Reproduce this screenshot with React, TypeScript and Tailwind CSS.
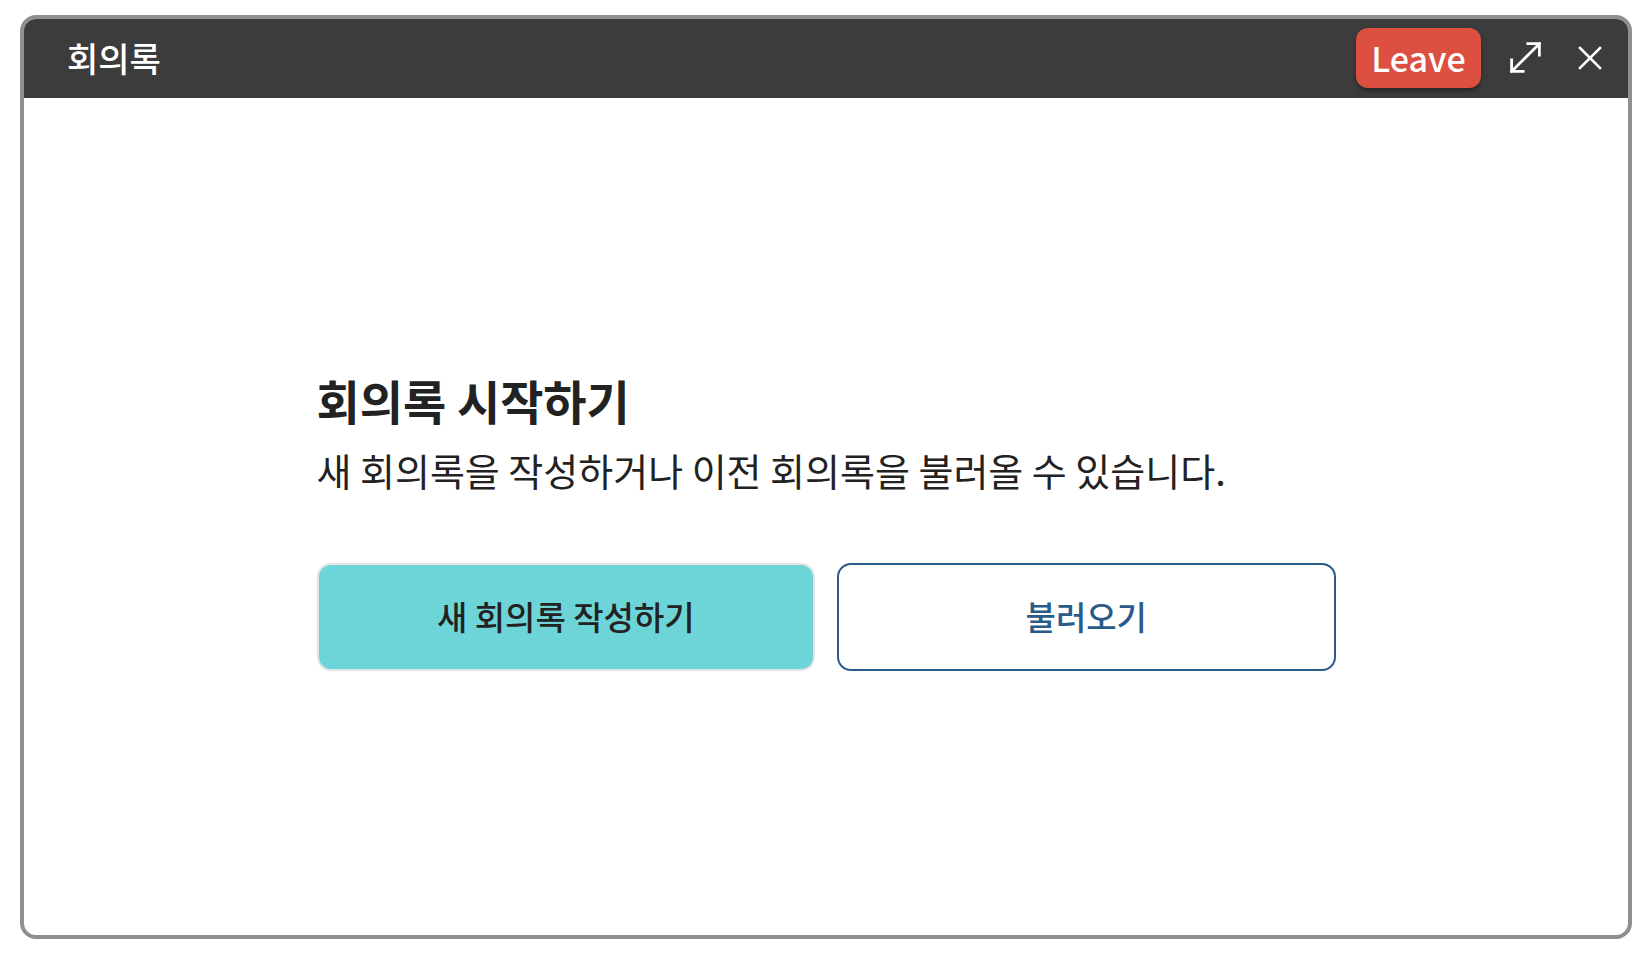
const ko = { fontFamily: '"Noto Sans CJK KR", "Noto Sans", sans-serif' }

function ExpandIcon() {
    return (
        <svg viewBox="0 0 24 24" className="h-[37px] w-[37px]" fill="none" stroke="white" strokeWidth="1.8" strokeLinecap="square">
            <line x1="3" y1="21" x2="21" y2="3" />
            <polyline points="13.5,3 21,3 21,10.5" />
            <polyline points="3,13.5 3,21 10.5,21" />
        </svg>
    )
}

function CloseIcon() {
    return (
        <svg viewBox="0 0 24 24" className="h-[24px] w-[24px]" fill="none" stroke="white" strokeWidth="2.6" strokeLinecap="square">
            <line x1="2" y1="2" x2="22" y2="22" />
            <line x1="22" y1="2" x2="2" y2="22" />
        </svg>
    )
}

export default function App() {
    return (
        <div className="h-[954px] w-[1642px] bg-white pl-[20px] pt-[15px]" style={ko}>
            <div className="flex h-[924px] w-[1612px] flex-col overflow-hidden rounded-[16px] border-4 border-[#8f8f8f] bg-white">
                {/* title bar */}
                <div className="flex h-[79px] shrink-0 items-center bg-[#3c3c3c] pb-[2px] pl-[43px] pr-[26px]">
                    <span className="text-[34px] font-medium leading-none text-white">회의록</span>
                    <div className="ml-auto flex items-center">
                        <button className="flex h-[60px] w-[125px] items-center justify-center rounded-[12px] bg-[#dc4f41] text-[34px] font-medium leading-none text-white shadow-[0_3px_4px_rgba(0,0,0,0.35)]">
                            Leave
                        </button>
                        <span className="ml-[26px] flex">
                            <ExpandIcon />
                        </span>
                        <span className="ml-[34px] flex">
                            <CloseIcon />
                        </span>
                    </div>
                </div>

                {/* body */}
                <div className="flex flex-1 items-center justify-center pt-[10px]">
                    <div className="w-[1019px]">
                        <h1 className="text-[47px] font-bold leading-[54px] text-[#222]">회의록 시작하기</h1>
                        <p className="mt-[20px] text-[38px] leading-[46px] text-[#222]">
                            새 회의록을 작성하거나 이전 회의록을 불러올 수 있습니다.
                        </p>
                        <div className="mt-[70px] grid grid-cols-2 gap-[22px]">
                            <button className="flex h-[108px] items-center justify-center rounded-[14px] border-2 border-[#e4e4e4] bg-[#6dd5d8] text-[33px] font-medium text-[#222]">
                                새 회의록 작성하기
                            </button>
                            <button className="flex h-[108px] items-center justify-center rounded-[14px] border-2 border-[#2a5a88] bg-white text-[33px] font-medium text-[#2a5a88]">
                                불러오기
                            </button>
                        </div>
                    </div>
                </div>
            </div>
        </div>
    )
}
